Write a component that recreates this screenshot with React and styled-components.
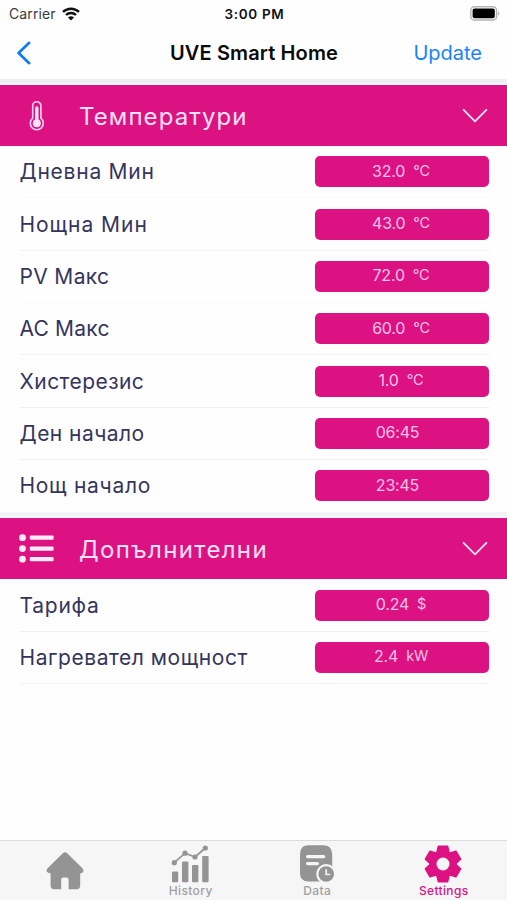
import React from 'react';
import styled, { createGlobalStyle } from 'styled-components';

const GlobalStyle = createGlobalStyle`
  * {
    box-sizing: border-box;
  }
  body {
    margin: 0;
    background: #fefefe;
    font-family: Inter, 'Liberation Sans', sans-serif;
  }
`;

const Screen = styled.div`
  display: flex;
  flex-direction: column;
  width: 507px;
  height: 900px;
  overflow: hidden;
  background: #fefefe;
`;

const StatusBar = styled.div`
  display: grid;
  grid-template-columns: 1fr auto 1fr;
  align-items: center;
  height: 27px;
  padding: 0 7px 0 9px;
  color: #111;
  font-size: 14px;
  white-space: nowrap;
`;

const Carrier = styled.div`
  display: flex;
  align-items: center;
  gap: 6px;
  color: #3a3a3a;
  letter-spacing: 0.12px;
`;

const Clock = styled.div`
  font-weight: 600;
  font-size: 13.5px;
  letter-spacing: 0.65px;
`;

const BatteryBox = styled.div`
  display: flex;
  justify-content: flex-end;
`;

const NavBar = styled.div`
  display: grid;
  grid-template-columns: 1fr auto 1fr;
  align-items: center;
  height: 52px;
  padding: 0 25px 1px;
  font-size: 20px;
  white-space: nowrap;
`;

const BackButton = styled.button`
  display: flex;
  margin-left: -9px;
  padding: 0;
  border: none;
  background: none;
`;

const Title = styled.div`
  padding-left: 1px;
  color: #0b0b0b;
  font-weight: 600;
  letter-spacing: 0.12px;
`;

const UpdateButton = styled.button`
  justify-self: end;
  padding: 0;
  border: none;
  background: none;
  color: #1a82fb;
  font-family: inherit;
  font-size: 20px;
`;

const SectionBlock = styled.section`
  padding-top: 6px;
  background: linear-gradient(
    ${({ $band }) => $band || '#ececf1'} 0 4px,
    #f8f8fb 4px 6px,
    transparent 6px
  );
`;

const SectionHeader = styled.div`
  display: flex;
  align-items: center;
  height: 61px;
  padding: 0 19px;
  background: #dc1182;
  color: #ffe0f4;
`;

const IconSlot = styled.div`
  display: flex;
  justify-content: center;
  width: 35px;
  margin-right: 25px;
`;

const SectionTitle = styled.div`
  flex: 1;
  padding-top: 1px;
  font-size: 24px;
  letter-spacing: ${({ $tracking }) => $tracking || 0}px;
  white-space: nowrap;
`;

const RowList = styled.div`
  padding: 0 18px 0 20px;
`;

const Row = styled.div`
  display: flex;
  align-items: center;
  justify-content: space-between;
  height: 52.35px;
  border-bottom: 1px solid ${({ $line }) => $line || '#f1f1f3'};
`;

const Label = styled.div`
  margin-left: -0.5px;
  color: #35355c;
  font-size: 21px;
  letter-spacing: ${({ $tracking }) => $tracking || 0}px;
  white-space: nowrap;
`;

const ValueButton = styled.div`
  display: flex;
  align-items: center;
  justify-content: center;
  gap: 8px;
  width: 174px;
  height: 31px;
  padding: 0 ${({ $time }) => ($time ? 9 : 2)}px 2px 0;
  border-radius: 5px;
  background: #dc1182;
  color: #ffc4e8;
  font-size: 16px;
  letter-spacing: -0.2px;
`;

const Unit = styled.span`
  padding-bottom: 1px;
  font-size: 14.5px;
`;

const TabBar = styled.nav`
  display: grid;
  grid-template-columns: repeat(4, 126.5px);
  height: 60px;
  margin-top: auto;
  border-top: 1px solid #dcdcdc;
  background: #f6f6f6;
`;

const Tab = styled.div`
  display: flex;
  flex-direction: column;
  align-items: center;
  padding-top: ${({ $iconOnly }) => ($iconOnly ? 11 : 4)}px;
  padding-left: ${({ $iconOnly }) => ($iconOnly ? 3 : 1)}px;
  color: ${({ $active }) => ($active ? '#dc1182' : '#949494')};
`;

const TabLabel = styled.div`
  padding-left: 1px;
  color: ${({ $active }) => ($active ? '#dc1182' : '#a0a0a0')};
  font-size: 12px;
  font-weight: 500;
  line-height: 15px;
  letter-spacing: 0.35px;
`;

const WifiIcon = () => (
  <svg width="18" height="14" viewBox="0 0 18 14" fill="none" stroke="#111" strokeWidth="2.4">
    <path d="M1 4.9a11.6 11.6 0 0 1 16 0" />
    <path d="M4 8a7.2 7.2 0 0 1 10 0" />
    <path d="M9 13.6 6 10.6a4.3 4.3 0 0 1 6 0z" fill="#111" stroke="none" />
  </svg>
);

const BatteryIcon = () => (
  <svg width="30" height="15" viewBox="0 0 30 15">
    <rect x="0.8" y="0.8" width="25.8" height="13.2" rx="3.6" fill="#fff" stroke="#b4b4b4" strokeWidth="1.4" />
    <rect x="2.6" y="2.6" width="22.2" height="9.6" rx="2" fill="#000" />
    <path d="M28 5.2c1.8.8 1.8 3.6 0 4.4z" fill="#b4b4b4" />
  </svg>
);

const BackIcon = () => (
  <svg width="16" height="24" viewBox="0 0 16 24" fill="none" stroke="#0a7cfb" strokeWidth="2.6" strokeLinecap="round" strokeLinejoin="round">
    <path d="M13.2 1.8 2.6 12l10.6 10.2" />
  </svg>
);

const ChevronIcon = () => (
  <svg width="26" height="15" viewBox="0 0 26 15" fill="none" stroke="#ffe6f6" strokeWidth="1.8" strokeLinecap="round" strokeLinejoin="round">
    <path d="M1.6 1.8 13 13.4 24.4 1.8" />
  </svg>
);

const ThermometerIcon = () => (
  <svg width="16" height="31" viewBox="0 0 16 31" fill="none">
    <path
      d="M3.7 5.8a4.1 4.1 0 0 1 8.2 0v12.4a6.5 6.5 0 1 1-8.2 0z"
      stroke="#ffd3ef"
      strokeWidth="1.6"
    />
    <path d="M7.8 8v15" stroke="#ffe3f5" strokeWidth="3.4" strokeLinecap="round" />
    <circle cx="7.8" cy="23.3" r="4" fill="#ffe3f5" />
  </svg>
);

const ListIcon = () => (
  <svg width="35" height="29" viewBox="0 0 35 29" fill="#ffeaf7">
    {[3.7, 14.6, 25.2].map((y) => (
      <React.Fragment key={y}>
        <circle cx="3.5" cy={y} r="3.4" />
        <rect x="10.8" y={y - 2.1} width="23.8" height="4.2" rx="1" />
      </React.Fragment>
    ))}
  </svg>
);

const HomeIcon = () => (
  <svg width="38" height="38" viewBox="0 0 38 38" fill="currentColor">
    <path d="M16.8 1.2Q19 -.6 21.2 1.2L36.4 16.2Q37.8 17.8 37.3 19.6Q36.6 21.4 34.2 21.4V33.6Q34.2 37.2 30.6 37.2H22.6V27.4Q22.6 25.4 20.6 25.4H17.2Q15.2 25.4 15.2 27.4V37.2H8.2Q4.6 37.2 4.6 33.6V21.4Q1.6 21.4.7 19.6Q.2 17.8 1.6 16.2Z" />
  </svg>
);

const HistoryIcon = () => (
  <svg width="38" height="38" viewBox="0 0 38 38" fill="currentColor">
    <rect x="1" y="26.5" width="6.2" height="10.8" rx="1" />
    <rect x="11" y="16.6" width="6.4" height="20.7" rx="1" />
    <rect x="21" y="20" width="6.4" height="17.3" rx="1" />
    <rect x="31.2" y="11" width="6.4" height="26.3" rx="1" />
    <path d="M3.3 17.7 14 8.2 24 12 34.3 3" fill="none" stroke="currentColor" strokeWidth="1.7" />
    <circle cx="3.3" cy="17.7" r="2.6" />
    <circle cx="14" cy="8.2" r="2.6" />
    <circle cx="24" cy="12" r="2.6" />
    <circle cx="34.3" cy="3" r="2.6" />
  </svg>
);

const DataIcon = () => (
  <svg width="36" height="38" viewBox="0 0 36 38" fill="none">
    <path
      d="M9.5.2H24Q33.2.2 33.2 9.4V28Q33.2 36.6 24 36.6H9.5Q1 36.6 1 28V9.4Q1 .2 9.5.2Z"
      fill="currentColor"
    />
    <path d="M8.5 11.6h16.2M8.5 18.6h10" stroke="#f6f6f6" strokeWidth="3.2" strokeLinecap="round" />
    <circle cx="27.2" cy="29" r="10" fill="#f6f6f6" />
    <circle cx="27.2" cy="29" r="7.8" fill="currentColor" />
    <path d="M27.2 24.3v5.2h4" stroke="#f6f6f6" strokeWidth="1.7" />
  </svg>
);

// three tapered bars crossed at 60° make the six teeth
const GearIcon = () => (
  <svg width="38" height="38" viewBox="-19 -19 38 38" fill="currentColor">
    {[0, 60, 120].map((angle) => (
      <path
        key={angle}
        d="M-4.6-17.6H4.6L6.4-10V10L4.6 17.6H-4.6L-6.4 10V-10Z"
        transform={`rotate(${angle})`}
        stroke="currentColor"
        strokeWidth="1.6"
        strokeLinejoin="round"
      />
    ))}
    <circle r="13" />
    <circle r="6.5" fill="#f6f6f6" />
  </svg>
);

const FAINT = '#fafafb';

const sections = [
  {
    title: 'Температури',
    tracking: 1.1,
    icon: <ThermometerIcon />,
    rows: [
      { label: 'Дневна Мин', tracking: 0.75, value: '32.0', unit: '°C', line: FAINT },
      { label: 'Нощна Мин', tracking: 0.95, value: '43.0', unit: '°C' },
      { label: 'PV Макс', tracking: 0.35, value: '72.0', unit: '°C', line: FAINT },
      { label: 'AC Макс', tracking: 0.2, value: '60.0', unit: '°C' },
      { label: 'Хистерезис', tracking: 0.45, value: '1.0', unit: '°C' },
      { label: 'Ден начало', tracking: 0.45, value: '06:45' },
      { label: 'Нощ начало', tracking: 0.7, value: '23:45', line: 'transparent' },
    ],
  },
  {
    title: 'Допълнителни',
    tracking: 1.35,
    band: '#f2f2f8',
    icon: <ListIcon />,
    rows: [
      { label: 'Тарифа', tracking: 0.75, value: '0.24', unit: '$' },
      { label: 'Нагревател мощност', tracking: 0.55, value: '2.4', unit: 'kW', line: '#f5f5f7' },
    ],
  },
];

const Section = ({ title, tracking, band, icon, rows }) => (
  <SectionBlock $band={band}>
    <SectionHeader>
      <IconSlot>{icon}</IconSlot>
      <SectionTitle $tracking={tracking}>{title}</SectionTitle>
      <ChevronIcon />
    </SectionHeader>
    <RowList>
      {rows.map((row) => (
        <Row key={row.label} $line={row.line}>
          <Label $tracking={row.tracking}>{row.label}</Label>
          <ValueButton $time={!row.unit}>
            <span>{row.value}</span>
            {row.unit && <Unit>{row.unit}</Unit>}
          </ValueButton>
        </Row>
      ))}
    </RowList>
  </SectionBlock>
);

const App = () => {
  return (
    <>
      <GlobalStyle />
      <Screen>
        <StatusBar>
          <Carrier>
            <span>Carrier</span>
            <WifiIcon />
          </Carrier>
          <Clock>3:00 PM</Clock>
          <BatteryBox>
            <BatteryIcon />
          </BatteryBox>
        </StatusBar>
        <NavBar>
          <BackButton>
            <BackIcon />
          </BackButton>
          <Title>UVE Smart Home</Title>
          <UpdateButton>Update</UpdateButton>
        </NavBar>
        {sections.map((section) => (
          <Section key={section.title} {...section} />
        ))}
        <TabBar>
          <Tab $iconOnly>
            <HomeIcon />
          </Tab>
          <Tab>
            <HistoryIcon />
            <TabLabel>History</TabLabel>
          </Tab>
          <Tab>
            <DataIcon />
            <TabLabel>Data</TabLabel>
          </Tab>
          <Tab $active>
            <GearIcon />
            <TabLabel $active>Settings</TabLabel>
          </Tab>
        </TabBar>
      </Screen>
    </>
  );
};

export default App;
